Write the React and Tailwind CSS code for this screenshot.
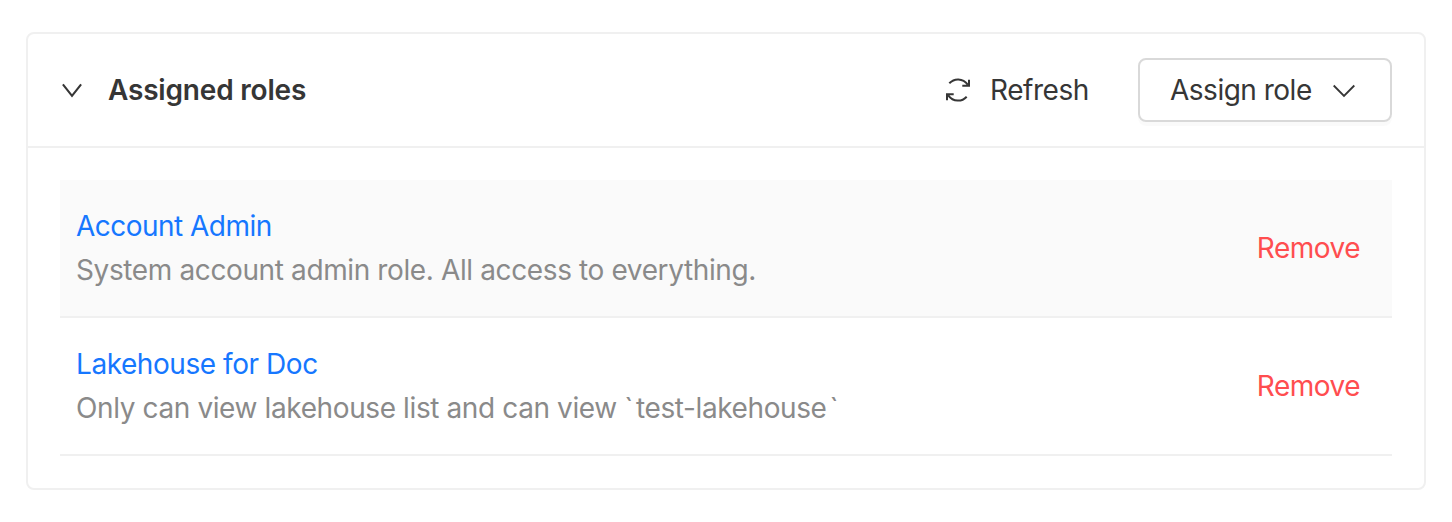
const roles = [
  { name: 'Account Admin', desc: 'System account admin role. All access to everything.', nt: 'tracking-[-0.53px]', dt: 'tracking-[-0.38px]', bg: 'bg-[#fafafa]' },
  { name: 'Lakehouse for Doc', desc: 'Only can view lakehouse list and can view ', code: 'test-lakehouse', nt: 'tracking-[-0.44px]', dt: 'tracking-[-0.39px]', bg: 'bg-white' },
];

export default function App() {
  return (
    <main className="h-[522px] bg-white px-[26px] pt-8 font-['Inter',sans-serif] text-[28px] leading-[44px] text-[#363636]">
      <section className="h-[458px] rounded-lg border-2 border-[#f0f0f0]">
        <header className="flex h-[114px] items-center border-b-2 border-[#f0f0f0] px-8">
          <svg viewBox="0 0 24 24" fill="none" stroke="currentColor" strokeWidth="2.1" className="h-6 w-6">
            <path d="M2.900 6.400L12 17.800L21.100 6.400" />
          </svg>
          <h2 className="ml-6 font-semibold tracking-[-0.19px]">Assigned roles</h2>
          <button className="ml-auto flex items-center">
            <svg viewBox="0 0 28 28" fill="none" stroke="currentColor" strokeWidth="2" className="h-7 w-7">
              <path d="M5.300 7.300C10.200 2 18.600 1.700 23.800 8.700M25 3.700v6.100h-6.700M22.700 20.700C17.800 26 9.400 26.300 4.200 19.300M3 24.300v-6.100h6.700" />
            </svg>
            <span className="ml-[18px] tracking-[-0.43px]">Refresh</span>
          </button>
          <button className="ml-[49px] flex h-16 w-[254px] items-center rounded-lg border-2 border-[#d9d9d9] pl-[30px] shadow-[0_4px_0_rgba(0,0,0,0.02)]">
            <span className="w-[141px] text-left whitespace-nowrap tracking-[-0.5px]">Assign role</span>
            <svg viewBox="0 0 24 24" fill="none" stroke="currentColor" strokeWidth="1.8" className="ml-[21px] h-6 w-6">
              <path d="M1.700 7.500L12 18L22.300 7.500" />
            </svg>
          </button>
        </header>
        <ul className="px-8 pt-8">
          {roles.map((r) => (
            <li key={r.name} className={`flex h-[138px] items-center justify-between border-b-2 border-[#f0f0f0] pr-8 pl-4 ${r.bg}`}>
              <div>
                <a className={`block w-max text-[#1677ff] ${r.nt}`}>{r.name}</a>
                <p className={`w-max text-[#8a8a8a] ${r.dt}`}>
                  {r.desc}
                  {r.code && (
                    <>
                      <span className="mr-[3px]">`</span>
                      {r.code}
                      <span className="ml-[3px]">`</span>
                    </>
                  )}
                </p>
              </div>
              <button className="tracking-[-0.5px] text-[#ff4d4f]">Remove</button>
            </li>
          ))}
        </ul>
      </section>
    </main>
  );
}
